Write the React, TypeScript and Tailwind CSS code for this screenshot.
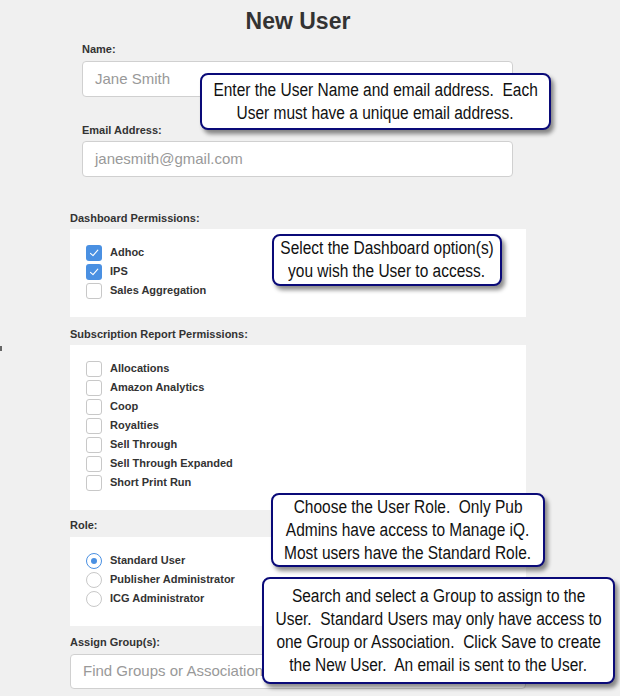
import { ReactNode } from "react";

const sans = "font-['Helvetica_Neue','Liberation_Sans',Arial,sans-serif]";

function Checkbox({ checked }: { checked?: boolean }) {
  if (checked) {
    return (
      <span className="flex h-[16px] w-[16px] items-center justify-center rounded-[3px] bg-[#4a90e2]">
        <svg width="12" height="12" viewBox="0 0 12 12" fill="none">
          <path
            d="M2.5 6.3 L5 8.6 L9.8 3.2"
            stroke="white"
            strokeWidth="1.1"
            strokeLinecap="round"
            strokeLinejoin="round"
          />
        </svg>
      </span>
    );
  }
  return (
    <span className="block h-[16px] w-[16px] rounded-[3px] border border-[#c8c8c8] bg-white" />
  );
}

function Radio({ checked }: { checked?: boolean }) {
  return (
    <span
      className={
        "flex h-[16px] w-[16px] items-center justify-center rounded-full border bg-white " +
        (checked ? "border-[#4a90e2]" : "border-[#c8c8c8]")
      }
    >
      {checked && <span className="h-[6px] w-[6px] rounded-full bg-[#4a90e2]" />}
    </span>
  );
}

function Row({ control, label }: { control: ReactNode; label: string }) {
  return (
    <div className="flex h-[19px] items-center gap-[8px]">
      {control}
      <span className="text-[11px] font-bold text-[#333]">{label}</span>
    </div>
  );
}

function Label({ children, className = "" }: { children: ReactNode; className?: string }) {
  return (
    <div className={"text-[11px] font-bold leading-[14px] text-[#333] " + className}>
      {children}
    </div>
  );
}

// callout text is Arial Narrow in the original; squeeze Liberation Sans to match
function Callout({ lines, className }: { lines: string[]; className: string }) {
  return (
    <div
      className={
        "absolute flex flex-col items-center justify-center rounded-[8px] border-2 border-[#0a0a78] bg-white shadow-[3px_4px_4px_rgba(0,0,0,0.45)] font-['Liberation_Sans',Arial,sans-serif] " +
        className
      }
    >
      {lines.map((l) => (
        <div
          key={l}
          className="scale-x-[0.86] whitespace-pre text-[18px] leading-[23px] text-[#111]"
        >
          {l}
        </div>
      ))}
    </div>
  );
}

const subscriptions = [
  "Allocations",
  "Amazon Analytics",
  "Coop",
  "Royalties",
  "Sell Through",
  "Sell Through Expanded",
  "Short Print Run",
];

export default function App() {
  return (
    <div className={"relative h-[696px] w-[620px] overflow-hidden bg-[#f0f0f0] " + sans}>
      <div className="absolute left-0 top-[346px] h-[5px] w-[2px] bg-[#666]" />

      <div className="ml-[70px] w-[456px] pt-[7px]">
        <h1 className="text-center text-[23px] font-bold leading-[28px] text-[#333]">
          New User
        </h1>

        <div className="pl-[12px] pr-[13px]">
          <Label className="mt-[7px]">Name:</Label>
          <div className="mt-[5px] flex h-[36px] items-center rounded-[4px] border border-[#d0d0d0] bg-white px-[12px] text-[15px] text-[#999]">
            Jane Smith
          </div>
          <Label className="mt-[26px]">Email Address:</Label>
          <div className="mt-[4px] flex h-[36px] items-center rounded-[4px] border border-[#d0d0d0] bg-white px-[12px] text-[15px] text-[#999]">
            janesmith@gmail.com
          </div>
        </div>

        <Label className="mt-[34px]">Dashboard Permissions:</Label>
        <div className="mt-[4px] bg-white pb-[17px] pl-[16px] pt-[14px]">
          <Row control={<Checkbox checked />} label="Adhoc" />
          <Row control={<Checkbox checked />} label="IPS" />
          <Row control={<Checkbox />} label="Sales Aggregation" />
        </div>

        <Label className="mt-[10px]">Subscription Report Permissions:</Label>
        <div className="mt-[4px] bg-white pb-[18px] pl-[16px] pt-[14px]">
          {subscriptions.map((s) => (
            <Row key={s} control={<Checkbox />} label={s} />
          ))}
        </div>

        <Label className="mt-[8px]">Role:</Label>
        <div className="mt-[5px] bg-white pb-[18px] pl-[16px] pt-[14px]">
          <Row control={<Radio checked />} label="Standard User" />
          <Row control={<Radio />} label="Publisher Administrator" />
          <Row control={<Radio />} label="ICG Administrator" />
        </div>

        <Label className="mt-[9px]">Assign Group(s):</Label>
        <div className="mt-[5px] flex h-[35px] items-center rounded-[4px] border border-[#d0d0d0] bg-white px-[12px] text-[15px] text-[#999]">
          Find Groups or Associations
        </div>
      </div>

      <Callout
        className="left-[200px] top-[73px] h-[57px] w-[351px]"
        lines={["Enter the User Name and email address.  Each", "User must have a unique email address."]}
      />
      <Callout
        className="left-[272px] top-[234px] h-[52px] w-[230px]"
        lines={["Select the Dashboard option(s)", "you wish the User to access."]}
      />
      <Callout
        className="left-[271px] top-[493px] h-[74px] w-[274px]"
        lines={[
          "Choose the User Role.  Only Pub",
          "Admins have access to Manage iQ.",
          "Most users have the Standard Role.",
        ]}
      />
      <Callout
        className="left-[262px] top-[577px] h-[107px] w-[353px]"
        lines={[
          "Search and select a Group to assign to the",
          "User.  Standard Users may only have access to",
          "one Group or Association.  Click Save to create",
          "the New User.  An email is sent to the User.",
        ]}
      />
    </div>
  );
}
